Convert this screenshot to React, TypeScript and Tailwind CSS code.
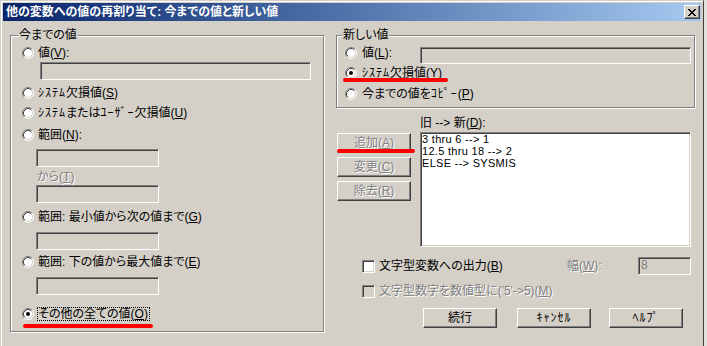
import type { ReactNode } from "react";

const FONT =
  "font-['Liberation_Sans','Noto_Sans_CJK_JP',sans-serif] [font-feature-settings:'palt']";
const DIS = "text-[#808080] [text-shadow:1px_1px_0_#fff]";
const SUNK =
  "border border-t-[#808080] border-l-[#808080] border-r-white border-b-white shadow-[inset_1px_1px_0_#404040,inset_-1px_-1px_0_#d4d0c8]";
const RAISED =
  "border border-t-white border-l-white border-r-[#404040] border-b-[#404040] shadow-[inset_-1px_-1px_0_#808080] bg-[#d4d0c8]";
const GROUP =
  "border border-[#808080] shadow-[inset_1px_1px_0_#fff,1px_1px_0_#fff] m-0 p-0";

// half-width katakana, spaced out a little like the UI font
function Kana({ children }: { children: ReactNode }) {
  return (
    <span className="tracking-[1px] [font-feature-settings:normal]">{children}</span>
  );
}

function Radio({ checked = false }: { checked?: boolean }) {
  return (
    <svg width="12" height="12" viewBox="0 0 12 12" className="shrink-0">
      <circle cx="6" cy="6" r="5" fill="#fff" />
      <path d="M2.1 9.9A5.5 5.5 0 0 1 9.9 2.1" fill="none" stroke="#808080" />
      <path d="M9.9 2.1A5.5 5.5 0 0 1 2.1 9.9" fill="none" stroke="#fff" />
      <path d="M2.82 9.18A4.5 4.5 0 0 1 9.18 2.82" fill="none" stroke="#404040" />
      <path d="M9.18 2.82A4.5 4.5 0 0 1 2.82 9.18" fill="none" stroke="#d4d0c8" />
      {checked && <circle cx="6" cy="6" r="2" fill="#000" />}
    </svg>
  );
}

function Check({ disabled = false }: { disabled?: boolean }) {
  return (
    <span
      className={`block shrink-0 w-[13px] h-[13px] ${SUNK} ${
        disabled ? "bg-[#d4d0c8]" : "bg-white"
      }`}
    />
  );
}

function RadioRow({
  children,
  checked,
  className = "",
  gap = "ml-[4px]",
}: {
  children: ReactNode;
  checked?: boolean;
  className?: string;
  gap?: string;
}) {
  return (
    <div className={`relative flex items-center h-[14px] ${className}`}>
      <Radio checked={checked} />
      <span className={`${gap} leading-[13px] whitespace-nowrap`}>{children}</span>
    </div>
  );
}

function Btn({
  children,
  disabled = false,
  className = "",
}: {
  children: ReactNode;
  disabled?: boolean;
  className?: string;
}) {
  return (
    <button
      type="button"
      className={`h-[20px] flex items-center justify-center leading-[13px] ${RAISED} ${
        disabled ? DIS : "text-black"
      } ${className}`}
    >
      {children}
    </button>
  );
}

function RedMark({ className }: { className: string }) {
  return (
    <div
      className={`absolute h-[4px] rounded-full bg-[#ff0000] blur-[0.6px] ${className}`}
    />
  );
}

export default function App() {
  return (
    <div
      className={`w-[707px] h-[346px] overflow-hidden flex bg-[#e4e2dc] text-[12px] leading-[14px] text-black ${FONT}`}
    >
      <div className="w-[704px] h-[360px] shrink-0 bg-[#d4d0c8] border-t border-l border-r border-t-[#d4d0c8] border-l-[#d4d0c8] border-r-[#404040] shadow-[inset_1px_1px_0_#fff] p-[2px]">
        {/* title bar */}
        <div className="h-[18px] flex items-center justify-between bg-linear-to-r from-[#0a246a] to-[#a6caf0] pl-[3px] pr-[1px]">
          <span className="text-white font-bold leading-[14px] whitespace-nowrap">
            他の変数への値の再割り当て: 今までの値と新しい値
          </span>
          <button
            type="button"
            className={`w-[16px] h-[14px] flex items-center justify-center ${RAISED}`}
          >
            <svg width="8" height="7" viewBox="0 0 8 7" shapeRendering="crispEdges">
              <path
                d="M0 0h2v1H0zM6 0h2v1H6zM1 1h2v1H1zM5 1h2v1H5zM2 2h4v1H2zM3 3h2v1H3zM2 4h4v1H2zM1 5h2v1H1zM5 5h2v1H5zM0 6h2v1H0zM6 6h2v1H6z"
                fill="#000"
              />
            </svg>
          </button>
        </div>

        <div className="flex pl-[7px] pt-[8px]">
          {/* 今までの値 */}
          <fieldset className={`w-[314px] h-[303px] ${GROUP}`}>
            <legend className="ml-[7px] px-[1px] h-[13px] leading-[13px] bg-[#d4d0c8]">
              今までの値
            </legend>
            <div className="flex flex-col">
              <RadioRow className="mt-[4px] ml-[11px]">
                値(<u>V</u>):
              </RadioRow>
              <div className={`mt-[2px] ml-[29px] w-[271px] h-[18px] ${SUNK}`} />
              <RadioRow className="mt-[6px] ml-[11px]">
                <Kana>ｼｽﾃﾑ</Kana>欠損値(<u>S</u>)
              </RadioRow>
              <RadioRow className="mt-[6px] ml-[11px]">
                <Kana>ｼｽﾃﾑ</Kana>または<Kana>ﾕｰｻﾞｰ</Kana>欠損値(<u>U</u>)
              </RadioRow>
              <RadioRow className="mt-[8px] ml-[11px]">
                範囲(<u>N</u>):
              </RadioRow>
              <div className={`mt-[7px] ml-[25px] w-[123px] h-[18px] ${SUNK}`} />
              <div className={`mt-[3px] ml-[26px] h-[14px] leading-[14px] ${DIS}`}>
                から(<u>T</u>)
              </div>
              <div className={`mt-[1px] ml-[25px] w-[123px] h-[18px] ${SUNK}`} />
              <RadioRow className="mt-[7px] ml-[11px]">
                範囲: 最小値から次の値まで(<u>G</u>)
              </RadioRow>
              <div className={`mt-[8px] ml-[25px] w-[123px] h-[18px] ${SUNK}`} />
              <RadioRow className="mt-[5px] ml-[11px]">
                範囲: 下の値から最大値まで(<u>E</u>)
              </RadioRow>
              <div className={`mt-[8px] ml-[25px] w-[123px] h-[18px] ${SUNK}`} />
              <RadioRow
                checked
                className="mt-[12px] ml-[11px]"
                gap="ml-[3px] border border-dotted border-black h-[14px] leading-[12px] pr-[1px]"
              >
                その他の全ての値(<u>O</u>)
                <RedMark className="left-[1px] top-[17px] w-[130px]" />
              </RadioRow>
            </div>
          </fieldset>

          {/* right side */}
          <div className="ml-[12px] flex flex-col">
            <fieldset className={`w-[359px] h-[79px] ${GROUP}`}>
              <legend className="ml-[5px] px-[1px] h-[13px] leading-[13px] bg-[#d4d0c8]">
                新しい値
              </legend>
              <div className="flex flex-col">
                <div className="mt-[5px] h-[17px] flex items-start">
                  <span className="ml-[8px]">
                    <Radio />
                  </span>
                  <span className="ml-[5px] leading-[13px]">
                    値(<u>L</u>):
                  </span>
                  <div className={`ml-auto mr-[3px] w-[271px] h-[17px] ${SUNK}`} />
                </div>
                <RadioRow checked className="mt-[2px] ml-[8px]" gap="ml-[5px]">
                  <Kana>ｼｽﾃﾑ</Kana>欠損値(<u>Y</u>)
                  <RedMark className="-left-[2px] top-[12px] w-[105px] h-[3px]" />
                </RadioRow>
                <RadioRow className="mt-[7px] ml-[8px]" gap="ml-[5px]">
                  今までの値を<Kana>ｺﾋﾟｰ</Kana>(<u>P</u>)
                </RadioRow>
              </div>
            </fieldset>

            <div className="flex">
              <div className="relative ml-[1px] w-[74px] pt-[25px] flex flex-col gap-[4px]">
                <Btn disabled>
                  追加(<u>A</u>)
                </Btn>
                <Btn disabled>
                  変更(<u>C</u>)
                </Btn>
                <Btn disabled>
                  除去(<u>R</u>)
                </Btn>
                <RedMark className="left-0 top-[41px] w-[78px]" />
              </div>
              <div className="ml-[9px] flex flex-col">
                <div className="mt-[8px] h-[14px] leading-[14px]">
                  旧 --&gt; 新(<u>D</u>):
                </div>
                <div
                  className={`mt-[2px] w-[271px] h-[115px] bg-white pl-[1px] ${SUNK} font-['Liberation_Sans',sans-serif] text-[11px] tracking-[0.3px] leading-[12px]`}
                >
                  <div className="h-[12px]">3 thru 6 --&gt; 1</div>
                  <div className="h-[12px]">12.5 thru 18 --&gt; 2</div>
                  <div className="h-[12px]">ELSE --&gt; SYSMIS</div>
                </div>
              </div>
            </div>

            <div className="mt-[10px] h-[18px] flex items-center w-[357px]">
              <div className="ml-[26px] w-[205px] flex items-center">
                <Check />
                <span className="ml-[4px] leading-[13px]">
                  文字型変数への出力(<u>B</u>)
                </span>
              </div>
              <span className={`leading-[13px] ${DIS}`}>
                幅(<u>W</u>):
              </span>
              <div
                className={`ml-auto mr-[2px] w-[53px] h-[18px] pl-[2px] leading-[14px] ${SUNK} text-[#808080]`}
              >
                8
              </div>
            </div>

            <div className="mt-[9px] h-[14px] flex items-center">
              <span className="ml-[26px]">
                <Check disabled />
              </span>
              <span className={`ml-[4px] leading-[13px] ${DIS}`}>
                文字型数字を数値型に('5'-&gt;5)(<u>M</u>)
              </span>
            </div>

            <div className="mt-[10px] flex">
              <Btn className="ml-[87px] w-[74px]">続行</Btn>
              <Btn className="ml-[20px] w-[74px]">
                <Kana>ｷｬﾝｾﾙ</Kana>
              </Btn>
              <Btn className="ml-[18px] w-[74px]">
                <Kana>ﾍﾙﾌﾟ</Kana>
              </Btn>
            </div>
          </div>
        </div>
      </div>
    </div>
  );
}
